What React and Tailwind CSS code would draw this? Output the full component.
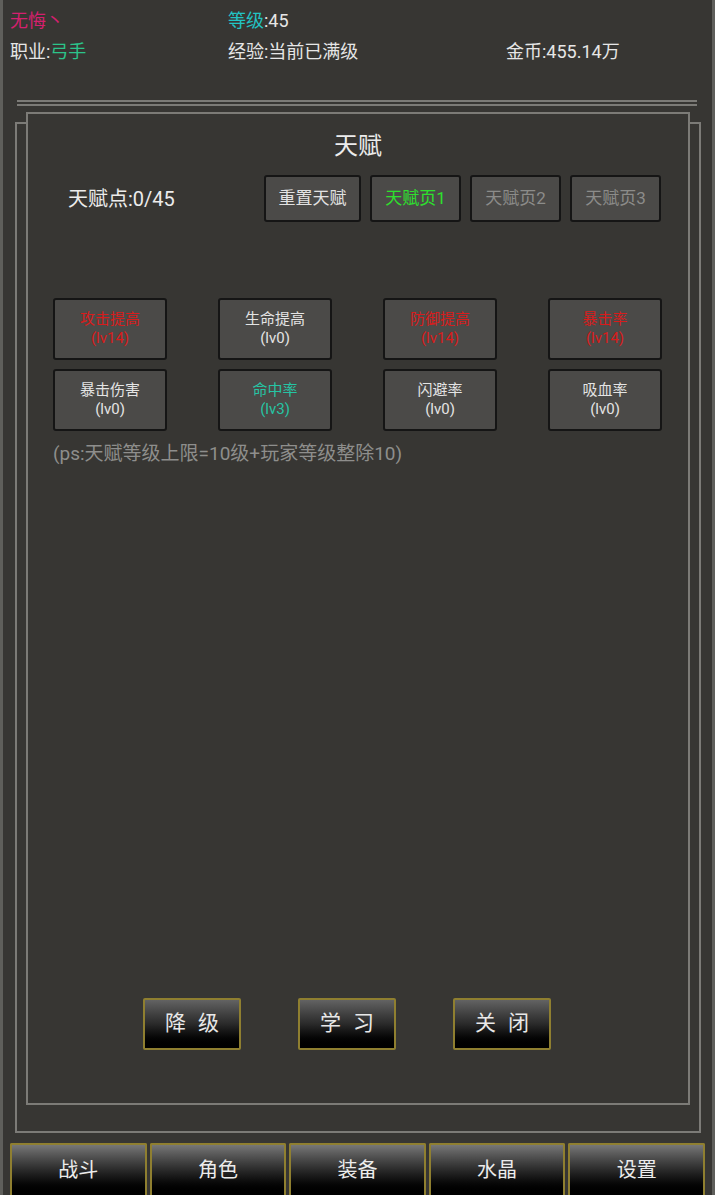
import React from 'react';

const font = { fontFamily: 'Roboto, "Noto Sans CJK SC", sans-serif' };

const talents = [
  { name: '攻击提高', lv: 14, tone: 'text-[#d81c1c]' },
  { name: '生命提高', lv: 0, tone: 'text-[#e4e4e4]' },
  { name: '防御提高', lv: 14, tone: 'text-[#d81c1c]' },
  { name: '暴击率', lv: 14, tone: 'text-[#d81c1c]' },
  { name: '暴击伤害', lv: 0, tone: 'text-[#e4e4e4]' },
  { name: '命中率', lv: 3, tone: 'text-[#26c4a4]' },
  { name: '闪避率', lv: 0, tone: 'text-[#e4e4e4]' },
  { name: '吸血率', lv: 0, tone: 'text-[#e4e4e4]' },
];

const pages = [
  { label: '重置天赋', w: 'w-[97px]', tone: 'text-[#e2e2e2]' },
  { label: '天赋页1', w: 'w-[91px]', tone: 'text-[#2ee02e]' },
  { label: '天赋页2', w: 'w-[91px]', tone: 'text-[#8c8c8a]' },
  { label: '天赋页3', w: 'w-[91px]', tone: 'text-[#8c8c8a]' },
];

const tabs = ['战斗', '角色', '装备', '水晶', '设置'];

const GoldButton = ({ children }) => (
  <button className="w-[98px] h-[52px] border-2 border-[#8f7f30] rounded-[2px] bg-gradient-to-b from-[#636363] via-[#2a2a2a] to-[#000000] text-[#e8e8e8] text-[21px] tracking-[12px] pl-[12px] flex items-center justify-center">
    {children}
  </button>
);

const App = () => {
  return (
    <div className="w-[715px] h-[1195px] bg-[#373633] flex overflow-hidden" style={font}>
      <div className="w-[3px] bg-[#5f5f5b]" />

      <div className="flex-1 flex flex-col">
        {/* header */}
        <div className="pt-[6px] pl-[7px] text-[18px] text-[#e6e6e6]">
          <div className="flex h-[28px] items-center">
            <span className="w-[218px] text-[#d4206e]">无悔丶</span>
            <span><span className="text-[#22c4c4]">等级</span>:45</span>
          </div>
          <div className="flex h-[28px] items-center mt-[3px]">
            <span className="w-[218px]">职业:<span className="text-[#2cc48a]">弓手</span></span>
            <span className="w-[278px]">经验:当前已满级</span>
            <span>金币:455.14万</span>
          </div>
        </div>

        {/* double rule */}
        <div className="mt-[35px] ml-[14px] w-[680px] h-[6px] border-t-2 border-b-2 border-[#7c7b77]" />

        {/* outer frame */}
        <div className="mt-[16px] ml-[12px] w-[686px] border-2 border-[#7c7b77]">
          <div className="relative -mt-[12px] ml-[9px] mb-[26px] w-[664px] h-[993px] border-2 border-[#7c7b77] bg-[#373633] flex flex-col">
            <div className="pt-[15px] h-[48px] text-center text-[24px] leading-[34px] text-[#ececec]">天赋</div>

            <div className="mt-[13px] flex items-center">
              <div className="ml-[40px] w-[196px] text-[20px] text-[#ececec]">天赋点:0/45</div>
              <div className="flex gap-[9px]">
                {pages.map((p) => (
                  <button
                    key={p.label}
                    className={`${p.w} h-[47px] bg-[#4b4a48] border-2 border-[#151515] rounded-[3px] text-[17px] ${p.tone}`}
                  >
                    {p.label}
                  </button>
                ))}
              </div>
            </div>

            <div className="mt-[76px] ml-[25px] grid grid-cols-[114px_114px_114px_114px] gap-x-[51px] gap-y-[9px]">
              {talents.map((t) => (
                <div
                  key={t.name}
                  className={`h-[62px] bg-[#4b4a48] border-2 border-[#151515] rounded-[3px] flex flex-col items-center justify-center text-[15px] leading-[19px] ${t.tone}`}
                >
                  <span>{t.name}</span>
                  <span>(lv{t.lv})</span>
                </div>
              ))}
            </div>

            <div className="mt-[10px] ml-[25px] text-[19px] leading-[26px] text-[#8e8e8c]">
              (ps:天赋等级上限=10级+玩家等级整除10)
            </div>

            <div className="mt-auto mb-[53px] ml-[115px] flex gap-[57px]">
              <GoldButton>降级</GoldButton>
              <GoldButton>学习</GoldButton>
              <GoldButton>关闭</GoldButton>
            </div>
          </div>
        </div>

        {/* bottom nav */}
        <div className="mt-[10px] ml-[7px] w-[695px] flex gap-[3px]">
          {tabs.map((t) => (
            <button
              key={t}
              className="flex-1 h-[52px] border-2 border-b-0 border-[#8f7f30] rounded-t-[2px] bg-gradient-to-b from-[#777777] via-[#2a2a2a] to-[#000000] text-[#ececec] text-[20px] flex items-center justify-center"
            >
              {t}
            </button>
          ))}
        </div>
      </div>

      <div className="w-[3px] bg-[#5f5f5b]" />
    </div>
  );
};

export default App;
